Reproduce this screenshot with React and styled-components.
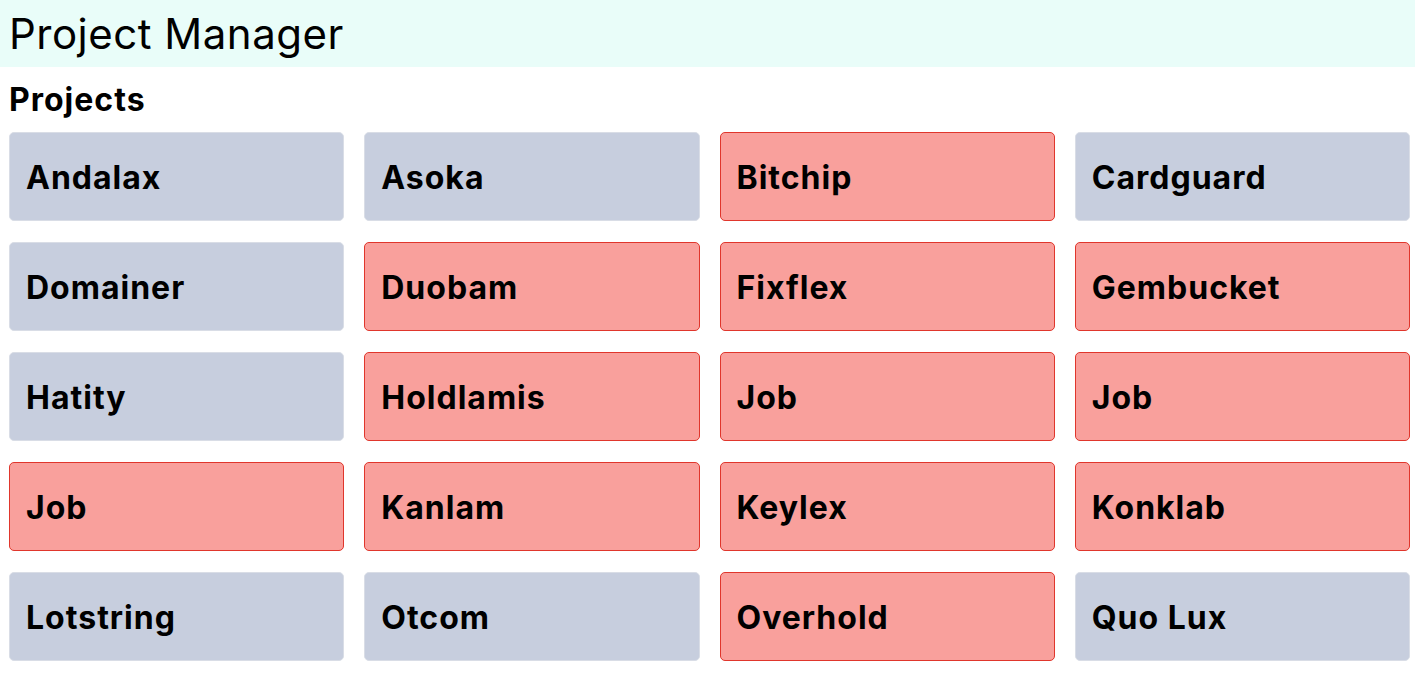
import styled, { createGlobalStyle } from "styled-components";

const projects = [
  { name: "Andalax", late: false },
  { name: "Asoka", late: false },
  { name: "Bitchip", late: true },
  { name: "Cardguard", late: false },
  { name: "Domainer", late: false },
  { name: "Duobam", late: true },
  { name: "Fixflex", late: true },
  { name: "Gembucket", late: true },
  { name: "Hatity", late: false },
  { name: "Holdlamis", late: true },
  { name: "Job", late: true },
  { name: "Job", late: true },
  { name: "Job", late: true },
  { name: "Kanlam", late: true },
  { name: "Keylex", late: true },
  { name: "Konklab", late: true },
  { name: "Lotstring", late: false },
  { name: "Otcom", late: false },
  { name: "Overhold", late: true },
  { name: "Quo Lux", late: false },
];

export default function App() {
  return (
    <>
      <GlobalStyle />
      <StyledHeader>
        <StyledAppTitle>Project Manager</StyledAppTitle>
      </StyledHeader>
      <StyledMain>
        <StyledSectionTitle>Projects</StyledSectionTitle>
        <StyledGrid>
          {projects.map((project, index) => (
            <StyledCard key={index} $late={project.late}>
              <StyledCardName>{project.name}</StyledCardName>
            </StyledCard>
          ))}
        </StyledGrid>
      </StyledMain>
    </>
  );
}

const GlobalStyle = createGlobalStyle`
  body {
    margin: 0;
    background: #ffffff;
    color: #000000;
    font-family: Inter, "Liberation Sans", sans-serif;
  }
`;

const StyledHeader = styled.header`
  display: flex;
  align-items: center;
  height: 67px;
  padding: 0 9px;
  background-color: #e9fdf9;
`;

const StyledAppTitle = styled.h1`
  margin: 0;
  font-size: 42px;
  font-weight: 400;
  letter-spacing: 0.5px;
`;

const StyledMain = styled.main`
  padding: 0 5px 0 9px;
`;

const StyledSectionTitle = styled.h2`
  margin: 0;
  height: 65px;
  display: flex;
  align-items: center;
  font-size: 32px;
  font-weight: 700;
  letter-spacing: 1px;
`;

const StyledGrid = styled.div`
  display: grid;
  grid-template-columns: repeat(4, 1fr);
  column-gap: 20px;
  row-gap: 21px;
`;

const StyledCard = styled.div`
  display: flex;
  align-items: center;
  height: 89px;
  box-sizing: border-box;
  padding: 2px 16px 0;
  border: 1px solid ${(props) => (props.$late ? "#e0362c" : "#d9dde6")};
  border-radius: 5px;
  background-color: ${(props) => (props.$late ? "#f9a09c" : "#c7cede")};
`;

const StyledCardName = styled.span`
  font-size: 32px;
  font-weight: 700;
  letter-spacing: 1px;
`;
